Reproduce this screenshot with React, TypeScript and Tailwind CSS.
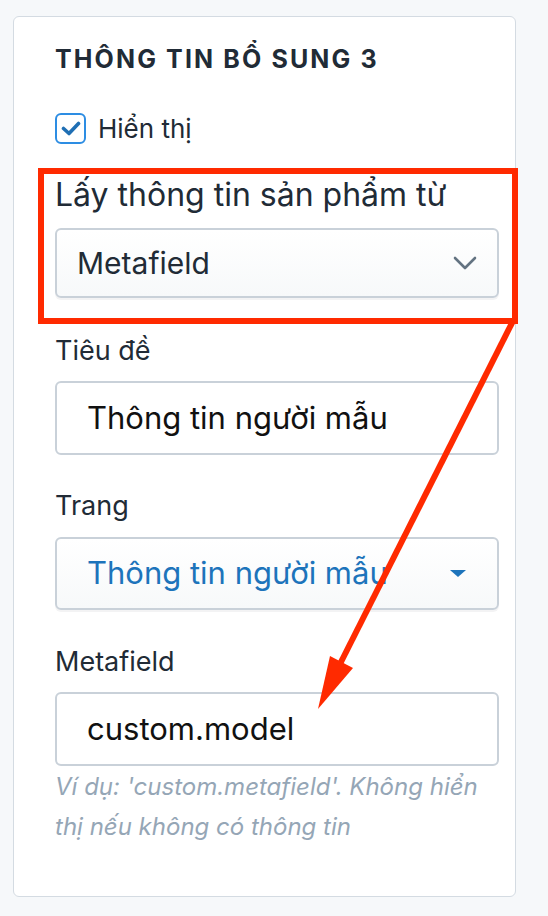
import type { ReactNode } from 'react'

const font = { fontFamily: 'Inter, "Noto Sans", sans-serif' }

function Label({ children, className = '' }: { children: ReactNode; className?: string }) {
  return (
    <div className={`text-[27px] leading-[32px] text-[#212b36] ${className}`}>{children}</div>
  )
}

function ChevronDown() {
  return (
    <svg width="24" height="14" viewBox="0 0 24 14" fill="none">
      <path d="M2 2 L12 12 L22 2" stroke="#637381" strokeWidth="2.6" strokeLinecap="round" strokeLinejoin="round" />
    </svg>
  )
}

function Caret() {
  return (
    <svg width="18" height="10" viewBox="0 0 18 10">
      <path d="M1 1 H17 L9 8 Z" fill="#1d74bb" />
    </svg>
  )
}

export default function App() {
  return (
    <div style={font} className="relative min-h-[916px] w-[548px] bg-[#f6f8fa] pt-4 pl-[13px]">
      <section className="flex h-[881px] w-[503px] flex-col rounded-[6px] border border-[#d4dbe2] bg-white pl-[41px] pr-[15px] pt-[26px]">
        <h2 className="text-[25px] font-bold uppercase leading-[32px] tracking-[0.085em] text-[#212b36]">
          Thông tin bổ sung 3
        </h2>

        <label className="mt-[37px] flex h-[32px] items-center gap-[12px]">
          <span className="flex h-[31px] w-[31px] items-center justify-center rounded-[6px] border-[2.5px] border-[#2d8de3] bg-white">
            <svg width="20" height="15" viewBox="0 0 20 15" fill="none">
              <path d="M2.5 7.5 L8 12.5 L17.5 2.5" stroke="#1f6fb4" strokeWidth="3.6" strokeLinecap="round" strokeLinejoin="round" />
            </svg>
          </span>
          <span className="text-[26px] text-[#212b36]">Hiển thị</span>
        </label>

        <div className="mt-[31px] text-[32px] leading-[40px] text-[#212b36]">Lấy thông tin sản phẩm từ</div>
        <div className="mt-[13px] flex h-[70px] w-[444px] items-center justify-between rounded-[6px] border-2 border-[#c9d1d9] bg-gradient-to-b from-white to-[#f7f9fa] pl-[20px] pr-[20px] shadow-[0_2px_0_rgba(22,29,37,0.05)]">
          <span className="text-[30px] text-[#212b36]">Metafield</span>
          <ChevronDown />
        </div>

        <Label className="mt-[37px]">Tiêu đề</Label>
        <div className="mt-[14px] flex h-[74px] w-[444px] items-center rounded-[6px] border-2 border-[#c9d1d9] bg-white pl-[30px]">
          <span className="text-[31px] text-[#111]">Thông tin người mẫu</span>
        </div>

        <Label className="mt-[35px]">Trang</Label>
        <div className="mt-[15px] flex h-[73px] w-[444px] items-center justify-between rounded-[6px] border-2 border-[#c9d1d9] bg-gradient-to-b from-white to-[#f7f9fa] pl-[30px] pr-[30px] shadow-[0_2px_0_rgba(22,29,37,0.05)]">
          <span className="text-[31px] text-[#1d74bb]">Thông tin người mẫu</span>
          <Caret />
        </div>

        <Label className="mt-[36px]">Metafield</Label>
        <div className="mt-[14px] flex h-[74px] w-[444px] items-center rounded-[6px] border-2 border-[#c9d1d9] bg-white pl-[30px]">
          <span className="text-[31px] text-[#111]">custom.model</span>
        </div>
        <p className="mt-px w-[440px] text-[24px] italic leading-[40px] text-[#95a6b6]">
          Ví dụ: 'custom.metafield'. Không hiển thị nếu không có thông tin
        </p>
      </section>

      {/* annotation overlay */}
      <div className="pointer-events-none absolute left-[38px] top-[168px] h-[156px] w-[480px] border-[6px] border-[#ff2a00]" />
      <svg className="pointer-events-none absolute left-0 top-0" width="548" height="916" viewBox="0 0 548 916">
        <line x1="513" y1="321" x2="340" y2="664" stroke="#ff2a00" strokeWidth="6" />
        <path d="M318 709 L330 656 L353 668 Z" fill="#ff2a00" />
      </svg>
    </div>
  )
}
